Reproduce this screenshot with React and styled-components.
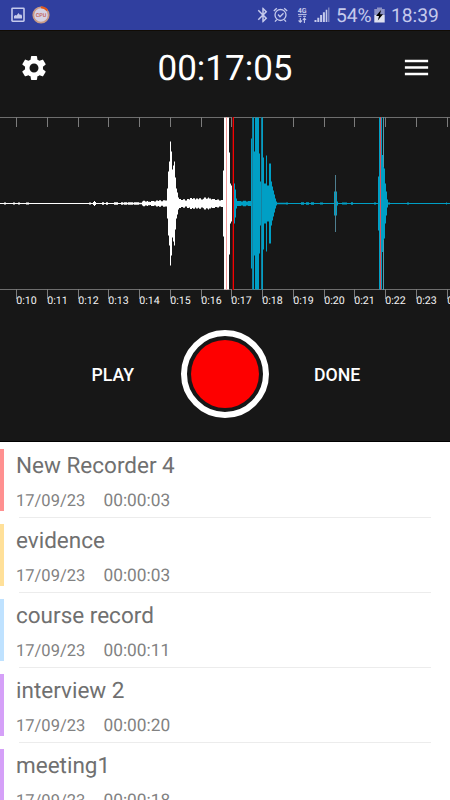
import React from 'react';
import styled, { createGlobalStyle } from 'styled-components';
import { MdSettings, MdMenu, MdBluetooth } from 'react-icons/md';

const GlobalStyle = createGlobalStyle`
  * {
    box-sizing: border-box;
  }
  body {
    margin: 0;
    background: #fff;
    font-family: Roboto, "Liberation Sans", sans-serif;
    text-rendering: geometricPrecision;
  }
`;

const Screen = styled.div`
  display: flex;
  flex-direction: column;
  width: 450px;
  height: 800px;
  overflow: hidden;
`;

const StatusBar = styled.div`
  display: flex;
  flex: none;
  align-items: center;
  height: 30px;
  padding: 0 11px;
  background: #303f9f;
  color: #c5caec;
  font-size: 19.2px;
  line-height: 30px;
`;

const StatusIcon = styled.svg`
  display: block;
  flex: none;
  margin-left: ${props => props.$gap || 0}px;
`;

const Spacer = styled.div`
  flex: 1;
`;

const StatusText = styled.span`
  width: ${props => props.$width}px;
  margin-left: ${props => props.$gap}px;
  padding-top: 1px;
  white-space: nowrap;
`;

const Header = styled.div`
  display: flex;
  flex: none;
  align-items: center;
  justify-content: space-between;
  height: 87px;
  padding: 0 18px 12px 19px;
  background: #171717;
  border-top: 1px solid #110c05;
  color: #fff;
`;

const IconButton = styled.button`
  display: flex;
  padding: 0 0 1px;
  border: 0;
  background: none;
  color: #fff;
`;

const Timer = styled.div`
  margin-top: 2px;
  font-size: 35px;
  line-height: 40px;
`;

const Wave = styled.svg`
  display: block;
  flex: none;
  background: #171717;
`;

const Controls = styled.div`
  display: grid;
  flex: none;
  grid-template-columns: 181px 88px 181px;
  align-items: center;
  height: 132px;
  padding-bottom: 4px;
  background: #171717;
  border-bottom: 1px solid #000;
`;

const TextButton = styled.button`
  padding: 2px 0 0;
  padding-${props => props.$side}: ${props => props.$inset}px;
  border: 0;
  background: none;
  color: #fff;
  font: 500 17.7px/24px Roboto, "Liberation Sans", sans-serif;
  text-align: ${props => props.$side};
`;

const RecordButton = styled.button`
  width: 88px;
  height: 88px;
  padding: 4px;
  border: 6px solid #fff;
  border-radius: 50%;
  background: #171717;

  &::before {
    content: '';
    display: block;
    width: 68px;
    height: 68px;
    border-radius: 50%;
    background: #fe0000;
  }
`;

const List = styled.ul`
  flex: 1;
  margin: 0;
  padding: 0;
  list-style: none;
  background: #fff;
`;

const Row = styled.li`
  display: flex;
  height: 75px;
  padding-top: 7px;
`;

const Stripe = styled.div`
  width: 4px;
  height: 62px;
  background: ${props => props.$color};
`;

const Info = styled.div`
  flex: 1;
  margin: 0 19px 0 15px;
  padding-top: 3px;
  height: 69px;
  background: linear-gradient(#ececec, #ececec) no-repeat 0 100% / 100% 1px;
`;

const Title = styled.div`
  margin-left: -3px;
  color: #707070;
  font-size: 22.5px;
  line-height: 28px;
`;

const Meta = styled.div`
  display: flex;
  align-items: baseline;
  margin: 9px 0 0 -3px;
  color: #828282;
  line-height: 25px;
`;

const Day = styled.span`
  width: 87.5px;
  font-size: 16.5px;
`;

const Duration = styled.span`
  font-size: 17.3px;
`;

const records = [
  { title: 'New Recorder 4', date: '17/09/23', length: '00:00:03', color: '#ff9090' },
  { title: 'evidence', date: '17/09/23', length: '00:00:03', color: '#ffe099' },
  { title: 'course record', date: '17/09/23', length: '00:00:11', color: '#bfe2ff' },
  { title: 'interview 2', date: '17/09/23', length: '00:00:20', color: '#d5a0f8' },
  { title: 'meeting1', date: '17/09/23', length: '00:00:18', color: '#d5a0f8' },
];

// [x, half height] steps, each one lasts until the next x
const played = [
  [0, 0.5], [4, 1], [6, 0.5], [13, 1], [15, 0.5], [18, 1], [20, 0.5], [26, 1], [29, 0.5],
  [89, 1], [91, 0.6], [93, 1.5], [94, 2.5], [95, 1.5], [96, 0.6], [102, 1.3], [104, 0.6], [106, 1.2], [108, 0.6],
  [114, 1.2], [118, 0.6], [121, 1.2], [123, 0.8], [124, 1.3], [127, 0.8], [128, 1.3], [133, 0.8], [134, 1.3], [139, 0.8],
  [142, 2], [143, 2.8], [145, 2], [147, 2.6], [148, 1.8], [150, 1.4], [151, 2.5], [154, 2], [156, 3], [158, 2.4], [159, 3.2], [161, 2.3],
  [163, 3.2], [165, 3], [167, 15], [168, 32], [169, 42], [170, 62], [171, 52], [172, 34], [173, 38], [174, 42], [175, 26],
  [176, 15], [177, 11], [178, 6], [179, 4.5], [181, 3.5], [183, 4.2], [185, 3], [187, 4.5], [189, 4], [190, 5.5], [192, 4.5],
  [193, 5.3], [195, 4], [196, 5], [198, 4.2], [199, 5.2], [201, 4], [203, 4.8], [204, 6], [206, 4.8], [207, 5], [208, 6],
  [209, 5], [211, 4], [212, 4.6], [215, 3.5], [217, 4], [219, 3], [221, 3.5], [223, 33], [224, 86], [229, 51], [230, 20], [231, 18], [233, 0],
];

const remaining = [
  [234, 20], [235, 14], [236, 5], [237, 2.5], [241, 2], [243, 2.8], [246, 2], [248, 2.6], [251, 65], [252, 86],
  [254, 52], [255, 86], [259, 50], [260, 22], [261, 86], [263, 46], [264, 20], [266, 48], [267, 18], [269, 40], [271, 22],
  [272, 17], [273, 13], [274, 9], [275, 5], [276, 2], [277, 0.8], [286, 1], [288, 0.5], [301, 1.2], [304, 0.6], [306, 1.2], [309, 0.6], [311, 1.2], [314, 0.5],
  [320, 1], [323, 0.5], [334, 12], [335, 28], [336, 12], [337, 2], [338, 0.5], [342, 1], [347, 0.5], [351, 1.2], [353, 0.5],
  [374, 1], [376, 0.5], [378, 27], [379, 86], [382, 34], [383, 86], [384, 35], [385, 20], [386, 12], [387, 4], [388, 1],
  [390, 0.5], [407, 1], [409, 0.5], [446, 1], [447, 0.5], [450, 0],
];

const toPath = steps => {
  const bars = steps.slice(0, -1).map(([x, h], i) => {
    const end = steps[i + 1][0];
    return `M${x} ${86.5 - h}H${end}V${86.5 + h}H${x}Z`;
  });
  return bars.join('');
};

const ticks = Array.from({ length: 15 }, (_, i) => ({
  x: Math.round(16 + i * 30.77),
  label: `0:${10 + i}`,
}));

const Waveform = () => (
  <Wave width="450" height="193" viewBox="0 0 450 193">
    <path d="M0 .5H450M0 172.5H450" stroke="#6e6e6e" />
    {ticks.map(({ x, label }) => (
      <g key={label}>
        <path d={`M${x + 0.5} 0V10M${x + 0.5} 172V182`} stroke="#7c7c7c" />
        <text x={x + 0.3} y="187" fill="#f4f4f4" fontSize="10.6">{label}</text>
      </g>
    ))}
    <path d={toPath(played)} fill="#fff" />
    <path d={toPath(remaining)} fill="#009fc5" />
    <g shapeRendering="crispEdges">
      <path d="M261 0h1v173h-1zM252 0h1v173h-1z" fill="#1681a0" />
      <path d="M382 38h1v97h-1z" fill="#009fc5" />
      <path d="M383 0h1v50h-1zM383 123h1v50h-1z" fill="#4d9ab0" />
      <path d="M226 0h1v173h-1z" fill="#f39a9a" />
      <path d="M335 58h1v57h-1z" fill="#4f7f90" />
      <path d="M380 0h1v173h-1z" fill="#d8505f" />
      <path d="M232 0h1v173h-1z" fill="#5b1212" />
      <path d="M233 0h1v173h-1z" fill="#f60000" />
    </g>
  </Wave>
);

const PictureIcon = () => (
  <StatusIcon width="14" height="16" viewBox="0 0 14 16">
    <rect x="1" y="1.2" width="12" height="13" rx=".6" fill="none" stroke="#c5caec" strokeWidth="1.6" />
    <path d="M3 11.5V9l1.5-1 1 .6L7.5 6 9 8l1-.8 1 1.5v2.8z" fill="#c5caec" />
  </StatusIcon>
);

const CpuIcon = () => (
  <StatusIcon $gap={7} width="18" height="18" viewBox="0 0 18 18">
    <circle cx="9" cy="9" r="7.7" fill="#d5d2e4" stroke="#c99b86" strokeWidth="1.8" />
    <path d="M9 1.3A7.7 7.7 0 0 1 15.3 4.5" fill="none" stroke="#e0561c" strokeWidth="2" />
    <text x="9" y="11" fill="#c2584c" fontSize="5.4" fontWeight="500" textAnchor="middle">CPU</text>
  </StatusIcon>
);

const AlarmIcon = () => (
  <StatusIcon $gap={1} width="15" height="16" viewBox="0 0 15 16" fill="none" stroke="#c5caec" strokeWidth="1.3">
    <circle cx="7.5" cy="8" r="5.5" />
    <path d="M.8 4L3.8 1.2M14.2 4L11.2 1.2M3.7 12.6L2 14.7M11.3 12.6L13 14.7M5 7.5L7 9.7L10.5 6.3" />
  </StatusIcon>
);

const NetworkIcon = () => (
  <StatusIcon $gap={9} width="11" height="17" viewBox="0 0 11 17">
    <text x="5.2" y="6" fill="#c5caec" fontSize="7" fontWeight="700" textAnchor="middle">4G</text>
    <path d="M1 7.4h8.6M1.5 9.3h3M6 9.3h3" stroke="#c5caec" strokeWidth="1" />
    <path d="M3.3 11v4M1.6 13.5l1.7 1.8L5 13.5M7.4 16v-4M5.8 13l1.6-1.8L9 13" fill="none" stroke="#c5caec" strokeWidth="1.1" />
  </StatusIcon>
);

const SignalIcon = () => (
  <StatusIcon $gap={6} width="16" height="16" viewBox="0 0 16 16">
    <path d="M.5 15v-2h2v2zM3.3 15v-4.3h2V15zM6.1 15V8h2v7zM8.9 15V5.2h2V15zM11.7 15V2.8h1.6V15z" fill="#c5caec" />
    <path d="M14 15V.5h1.5V15z" fill="#7780bd" />
  </StatusIcon>
);

const BatteryIcon = () => (
  <StatusIcon $gap={2} width="11" height="16" viewBox="0 0 11 16">
    <path d="M3 .5h5V2h2.7v6H.3V2H3z" fill="#8d93c5" />
    <path d="M.3 8h10.4v7.5H.3z" fill="#dfe1ef" />
    <path d="M7 3L2 9h3l-1.2 4.5L9 7.3H6z" fill="#000" />
  </StatusIcon>
);

const RecordRow = ({ title, date, length, color }) => (
  <Row>
    <Stripe $color={color} />
    <Info>
      <Title>{title}</Title>
      <Meta>
        <Day>{date}</Day>
        <Duration>{length}</Duration>
      </Meta>
    </Info>
  </Row>
);

const App = () => (
  <Screen>
    <GlobalStyle />
    <StatusBar>
      <PictureIcon />
      <CpuIcon />
      <Spacer />
      <MdBluetooth size={18} color="#c5caec" />
      <AlarmIcon />
      <NetworkIcon />
      <SignalIcon />
      <StatusText $width={36} $gap={6}>54%</StatusText>
      <BatteryIcon />
      <StatusText $width={48} $gap={6}>18:39</StatusText>
    </StatusBar>
    <Header>
      <IconButton aria-label="Settings"><MdSettings size={30} /></IconButton>
      <Timer>00:17:05</Timer>
      <IconButton aria-label="Menu"><MdMenu size={31} /></IconButton>
    </Header>
    <Waveform />
    <Controls>
      <TextButton $side="right" $inset={47}>PLAY</TextButton>
      <RecordButton aria-label="Record" />
      <TextButton $side="left" $inset={45}>DONE</TextButton>
    </Controls>
    <List>
      {records.map(record => (
        <RecordRow key={record.title} {...record} />
      ))}
    </List>
  </Screen>
);

export default App;
